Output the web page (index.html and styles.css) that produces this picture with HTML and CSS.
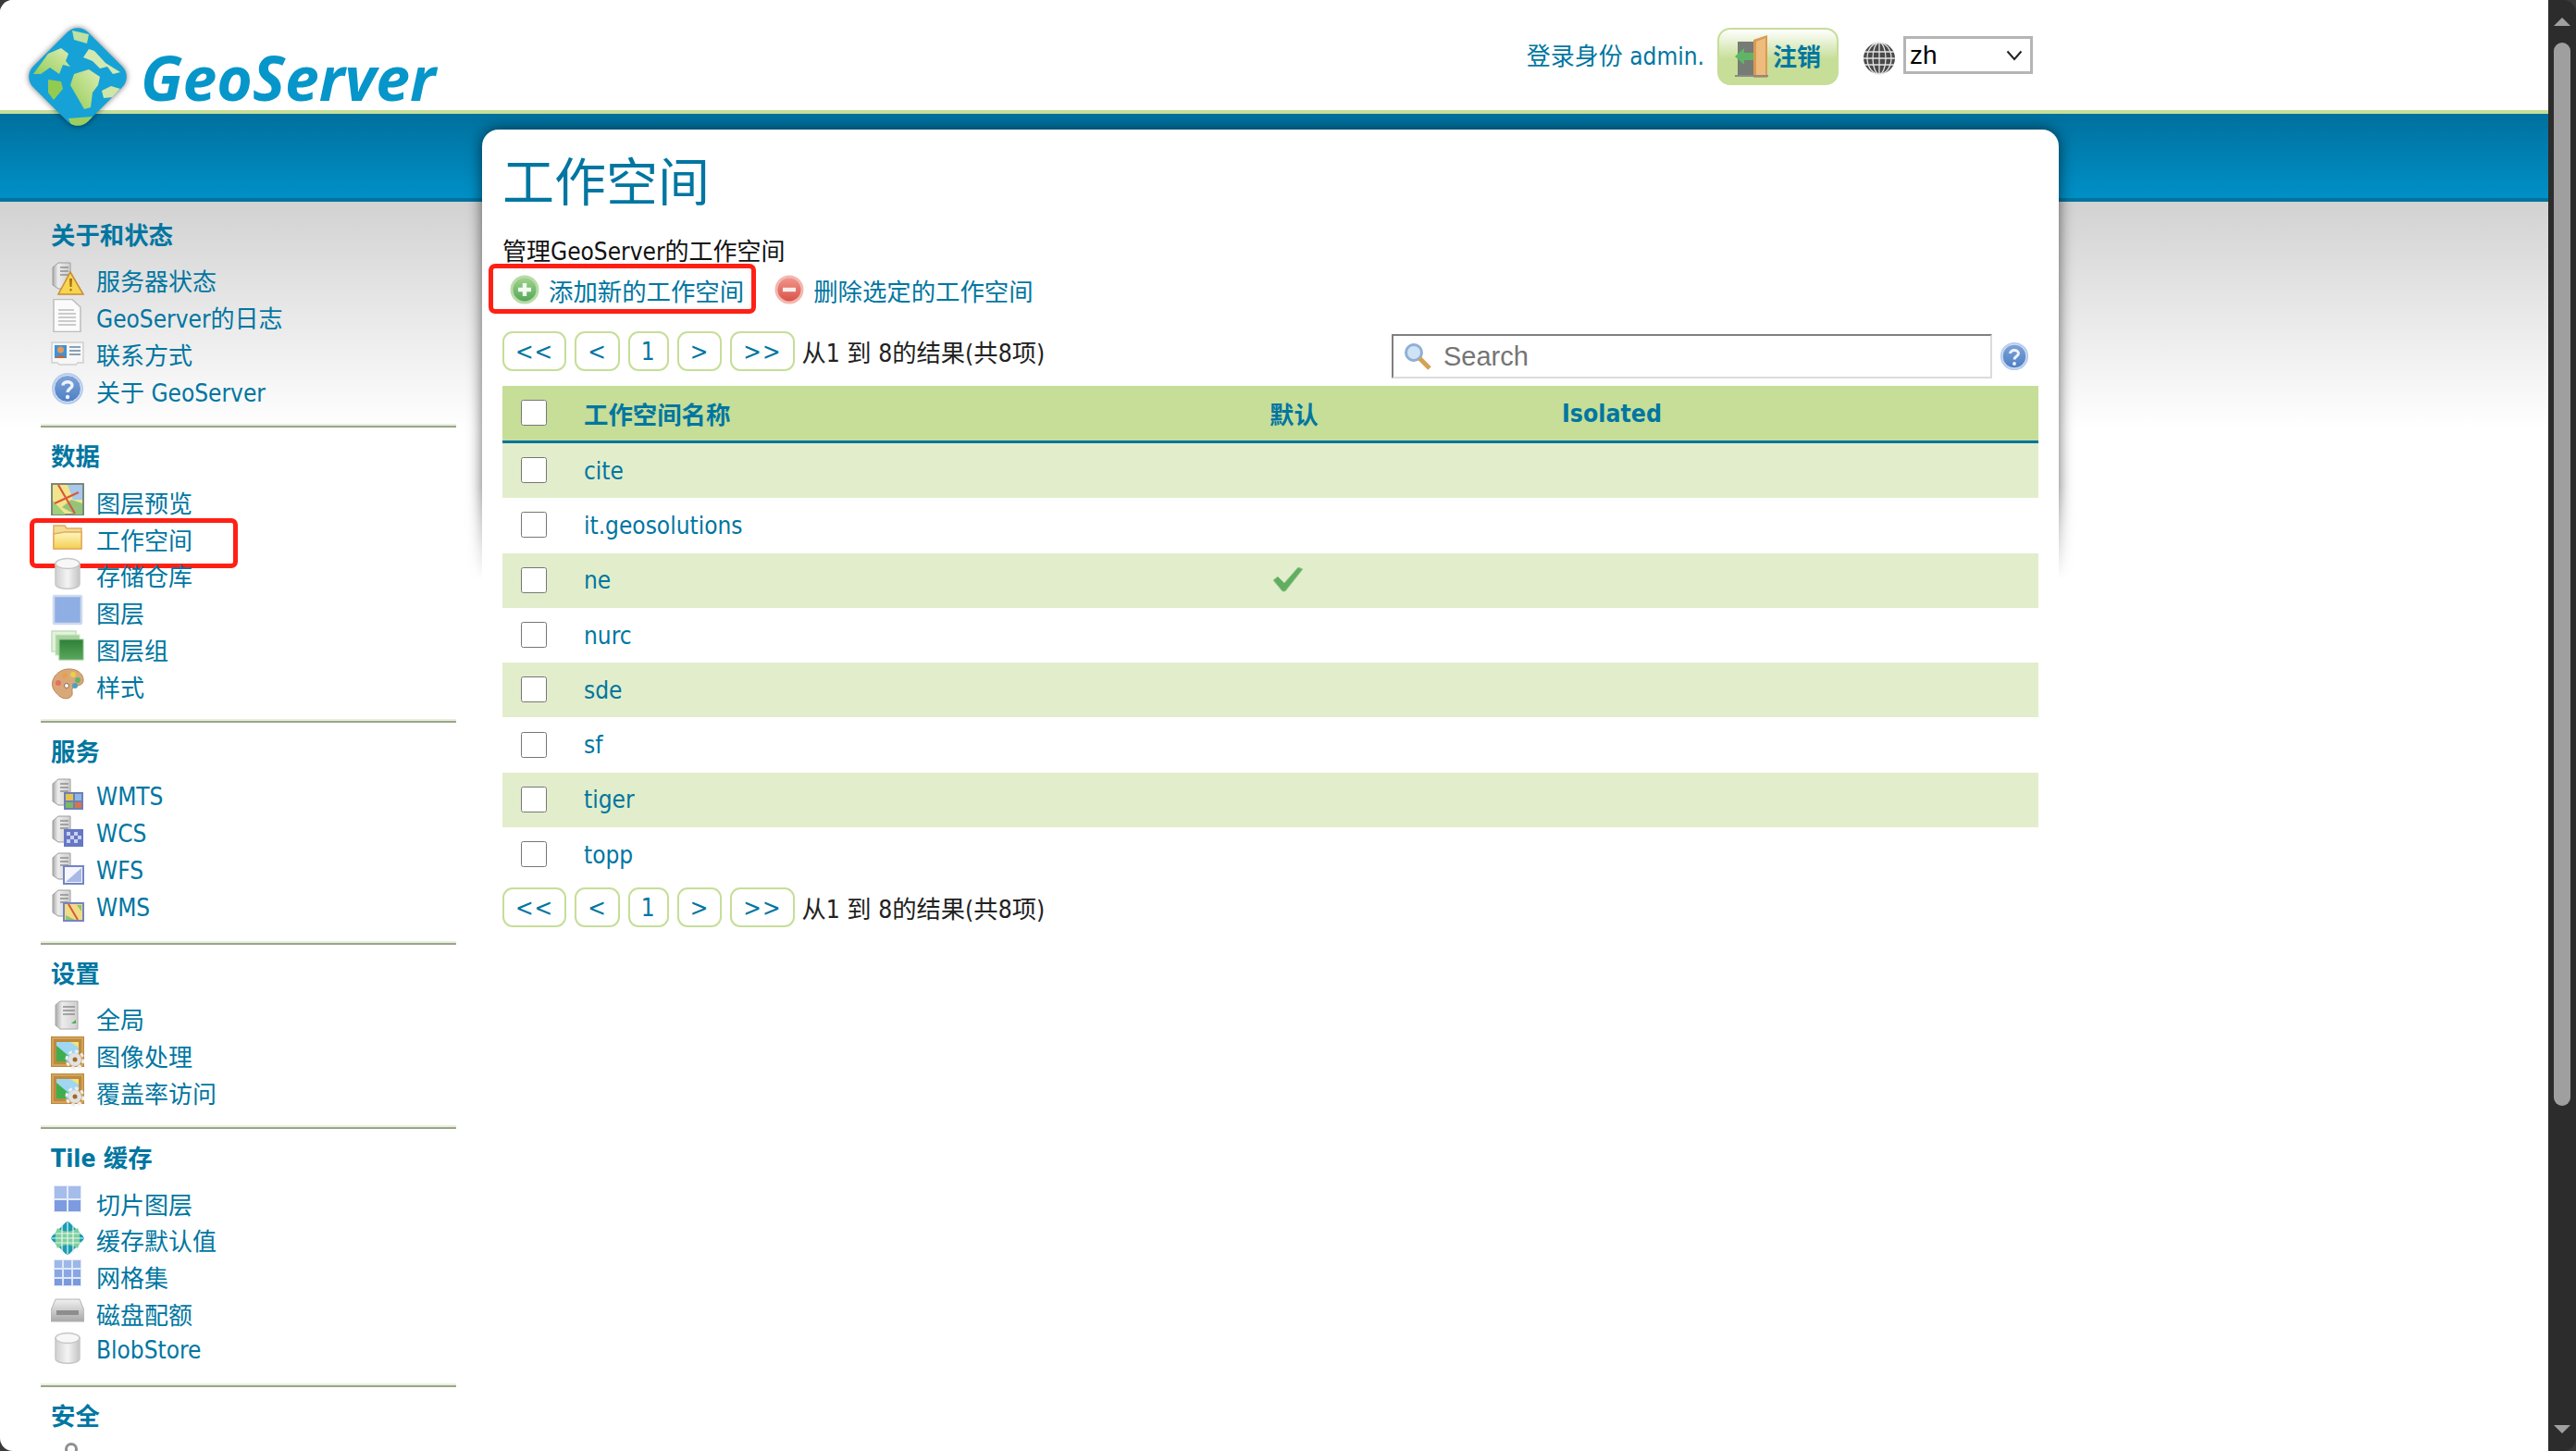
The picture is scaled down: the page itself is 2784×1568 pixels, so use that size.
FILE: index.html
```html
<!DOCTYPE html>
<html lang="zh">
<head>
    <meta charset="UTF-8">
    <title>GeoServer: 工作空间</title>
    <link rel="stylesheet" href="styles.css">
</head>
<body>
<svg class="defs" xmlns="http://www.w3.org/2000/svg">
    <defs>
        <linearGradient id="g-gray" x1="0" x2="1" y1="0" y2="0"><stop offset="0" stop-color="#a9a9a9"/><stop offset=".3" stop-color="#ececec"/><stop offset="1" stop-color="#cfcfcf"/></linearGradient>
        <linearGradient id="g-help" x1="0" x2="0" y1="0" y2="1"><stop offset="0" stop-color="#7fa3d8"/><stop offset="1" stop-color="#4d7fc4"/></linearGradient>
        <linearGradient id="g-folder" x1="0" x2="0" y1="0" y2="1"><stop offset="0" stop-color="#fff6c0"/><stop offset="1" stop-color="#f3cf52"/></linearGradient>
        <linearGradient id="g-db" x1="0" x2="1" y1="0" y2="0"><stop offset="0" stop-color="#cfcfcf"/><stop offset=".5" stop-color="#f4f4f4"/><stop offset="1" stop-color="#c4c4c4"/></linearGradient>
        <linearGradient id="g-green" x1="0" x2="0" y1="0" y2="1"><stop offset="0" stop-color="#2f7f38"/><stop offset="1" stop-color="#5aa75c"/></linearGradient>
        <linearGradient id="g-plus" x1="0" x2="0" y1="0" y2="1"><stop offset="0" stop-color="#9fd18b"/><stop offset="1" stop-color="#52a85a"/></linearGradient>
        <linearGradient id="g-minus" x1="0" x2="0" y1="0" y2="1"><stop offset="0" stop-color="#f1948a"/><stop offset="1" stop-color="#d9534a"/></linearGradient>
        <linearGradient id="g-disk" x1="0" x2="0" y1="0" y2="1"><stop offset="0" stop-color="#f0f0f0"/><stop offset="1" stop-color="#a8a8a8"/></linearGradient>
        <linearGradient id="g-land" x1="0" x2="1" y1="1" y2="0"><stop offset="0" stop-color="#95cc55"/><stop offset="1" stop-color="#dcedb4"/></linearGradient>
        <clipPath id="clip-globe"><rect x="12" y="13" width="84" height="84" rx="16" transform="rotate(45 54 55)"/></clipPath>
    </defs>

    <symbol id="i-server" viewBox="0 0 36 36">
        <path d="M2 6 8 1H21V29H8L2 25Z" fill="url(#g-gray)" stroke="#9c9c9c"/>
        <path d="M10 6H19M10 10H19M10 14H19" stroke="#8f8f8f" stroke-width="1.6"/>
    </symbol>
    <symbol id="i-warn" viewBox="0 0 36 36">
        <use href="#i-server"/>
        <path d="M21 11 35 35H8Z" fill="#f7d54e" stroke="#c98d34" stroke-width="1.5"/>
        <path d="M20 18H23L22.500 27H20.500ZM20.500 29H22.500V31.500H20.500Z" fill="#a6701c"/>
    </symbol>
    <symbol id="i-doc" viewBox="0 0 36 36">
        <path d="M3 .5H23L32 9V35.500H3Z" fill="#fbfbfb" stroke="#bdbdbd" stroke-width="1.500"/>
        <path d="M8 12H25M8 16H27M8 20H27M8 24H27M8 28H27" stroke="#bcbcbc" stroke-width="1.600"/>
    </symbol>
    <symbol id="i-card" viewBox="0 0 36 36">
        <path d="M1 7H35V29H29L27 31H9L7 29H1Z" fill="#f7f7f7" stroke="#cfcfcf" stroke-width="1.500"/>
        <rect x="4" y="10" width="13" height="14" fill="#3f92d8"/>
        <circle cx="10.500" cy="15" r="3.500" fill="#e6975a"/>
        <path d="M5.500 24C6 20 15 20 15.500 24Z" fill="#c9642e"/>
        <path d="M20 12H32M20 16H32M20 20H32" stroke="#8aa0b8" stroke-width="1.800"/>
    </symbol>
    <symbol id="i-help" viewBox="0 0 36 36">
        <circle cx="18" cy="18" r="17" fill="#b8cdea"/>
        <circle cx="18" cy="18" r="14.500" fill="url(#g-help)" stroke="#dfe9f6"/>
        <path d="M13 14.500C13 9.500 23 9.500 23 14.500 23 18 18 18 18 22" fill="none" stroke="#eef3fa" stroke-width="3.400"/>
        <circle cx="18" cy="27" r="2.200" fill="#eef3fa"/>
    </symbol>
    <symbol id="i-map" viewBox="0 0 36 36">
        <rect x="1" y="1" width="34" height="33" fill="#f2e48a" stroke="#7b887b" stroke-width="2"/>
        <path d="M2 19 16 34H2Z" fill="#9fcf78"/>
        <path d="M18 2H34V18H24Z" fill="#a8c8ec"/>
        <path d="M12 26 26 34H34V22L22 18Z" fill="#92c57a"/>
        <path d="M8 2 26 33M4 22 30 10" stroke="#d9573f" stroke-width="2.200" fill="none"/>
    </symbol>
    <symbol id="i-folder" viewBox="0 0 36 36">
        <path d="M3 6H15L17 9H33V31H3Z" fill="#f0dd94" stroke="#e3ab5e" stroke-width="1.500"/>
        <path d="M3 15 15 13H33V31H3Z" fill="url(#g-folder)" stroke="#e3ab5e" stroke-width="1.500"/>
    </symbol>
    <symbol id="i-db" viewBox="0 0 36 36">
        <path d="M5 7V29C5 36 31 36 31 29V7Z" fill="url(#g-db)" stroke="#c6c6c6" stroke-width="1.500"/>
        <ellipse cx="18" cy="7" rx="13" ry="5.500" fill="#f7f7f7" stroke="#c6c6c6" stroke-width="1.500"/>
    </symbol>
    <symbol id="i-layer" viewBox="0 0 36 36">
        <rect x="3" y="2" width="30" height="30" rx="1" fill="#8eaee4" stroke="#ced9ee" stroke-width="2.500"/>
    </symbol>
    <symbol id="i-group" viewBox="0 0 36 36">
        <rect x="1" y="1" width="26" height="22" fill="#e4f2df" stroke="#bfe0b8" stroke-width="1.500"/>
        <rect x="5" y="5" width="26" height="22" fill="#a9d3a0" stroke="#cbe6c4" stroke-width="1"/>
        <rect x="9" y="10" width="26" height="22" fill="url(#g-green)" stroke="#8fc48c"/>
    </symbol>
    <symbol id="i-palette" viewBox="0 0 36 36">
        <path d="M18 2C30 1 36 9 35 15 34 21 27 19 24 22 21 25 26 30 20 33 14 36 7 31 3 24-2 15 6 3 18 2Z" fill="#d9a878" stroke="#b88758"/>
        <circle cx="8" cy="17" r="3" fill="#e96d66"/>
        <circle cx="15" cy="9" r="3" fill="#eb9d4c"/>
        <circle cx="24" cy="8" r="3" fill="#e9cf4c"/>
        <circle cx="29" cy="14" r="3" fill="#5fb56a"/>
        <circle cx="26" cy="20" r="3" fill="#4c9fc4"/>
        <circle cx="17" cy="20" r="2.500" fill="#fff" stroke="#8a6a4a"/>
    </symbol>
    <symbol id="i-wmts" viewBox="0 0 36 36">
        <use href="#i-server"/>
        <rect x="14" y="15" width="21" height="19" fill="#6f7fb5"/>
        <rect x="16" y="17" width="8" height="7" fill="#e7c34c"/>
        <rect x="26" y="17" width="7" height="7" fill="#8fb7e6"/>
        <rect x="16" y="26" width="8" height="6" fill="#79b968"/>
        <rect x="26" y="26" width="7" height="6" fill="#d9734c"/>
    </symbol>
    <symbol id="i-wcs" viewBox="0 0 36 36">
        <use href="#i-server"/>
        <rect x="14" y="15" width="21" height="19" fill="#6677c6"/>
        <path d="M17 18H21V22H17ZM25 18H29V22H25ZM21 22H25V26H21ZM29 22H33V26H29ZM17 26H21V30H17ZM25 26H29V30H25Z" fill="#c8d0ee"/>
    </symbol>
    <symbol id="i-wfs" viewBox="0 0 36 36">
        <use href="#i-server"/>
        <rect x="14" y="15" width="21" height="19" fill="#f4f6fc" stroke="#7484c4" stroke-width="2"/>
        <path d="M16 32 33 17V32Z" fill="#a9b9e6"/>
    </symbol>
    <symbol id="i-wms" viewBox="0 0 36 36">
        <use href="#i-server"/>
        <rect x="14" y="15" width="21" height="19" fill="#f0dc84" stroke="#7484c4" stroke-width="2"/>
        <path d="M16 28 26 33H16ZM28 17H33V24Z" fill="#8fc474"/>
        <path d="M19 16 29 33" stroke="#d9573f" stroke-width="2"/>
    </symbol>
    <symbol id="i-global" viewBox="0 0 36 36">
        <path d="M5 5 10 1H29V31H10L5 27Z" fill="url(#g-gray)" stroke="#a8a8a8"/>
        <path d="M13 7H26M13 11H26M13 15H26" stroke="#8f8f8f" stroke-width="1.600"/>
        <path d="M22 25H27V21Z" fill="#4caf50"/>
    </symbol>
    <symbol id="i-image" viewBox="0 0 36 36">
        <rect x="0" y="0" width="36" height="33" fill="#bd8a3e"/>
        <rect x="2" y="2" width="32" height="29" fill="none" stroke="#d8ac66" stroke-width="1.500"/>
        <rect x="6" y="6" width="24" height="21" fill="#9fd6f2"/>
        <path d="M6 10 19 21 16 27H6Z" fill="#3fae4f"/>
        <path d="M21 6H30V12Z" fill="#f5e27a"/>
        <circle cx="26" cy="25" r="9" fill="none" stroke="#eeeeee" stroke-width="3" stroke-dasharray="4 3"/>
        <circle cx="26" cy="25" r="7" fill="#e2e2e2"/>
        <circle cx="26" cy="25" r="2.500" fill="#a06a28"/>
    </symbol>
    <symbol id="i-tiles" viewBox="0 0 36 36">
        <rect x="3" y="1" width="30" height="29" fill="#e4eaf7"/>
        <path d="M4 2H17V15H4ZM19 2H32V15H19Z" fill="#a5bdea"/>
        <path d="M4 17H17V29H4ZM19 17H32V29H19Z" fill="#7c9be0"/>
    </symbol>
    <symbol id="i-grid" viewBox="0 0 36 36">
        <rect x="3" y="1" width="30" height="29" fill="#dfe7f7"/>
        <path d="M4 2H12V10H4ZM14 2H22V10H14ZM24 2H32V10H24Z" fill="#9db7e8"/>
        <path d="M4 12H12V20H4ZM14 12H22V20H14ZM24 12H32V20H24Z" fill="#88a6e3"/>
        <path d="M4 22H12V29H4ZM14 22H22V29H14ZM24 22H32V29H24Z" fill="#7a99de"/>
    </symbol>
    <symbol id="i-gridglobe" viewBox="0 0 36 36">
        <rect x="4.500" y="4.500" width="27" height="27" rx="4" transform="rotate(45 18 18)" fill="#1a9cb4"/>
        <path d="M7 7C15 12 21 12 29 7 32 13 32 23 29 29 21 24 15 24 7 29 4 23 4 13 7 7Z" fill="#7fcf9c"/>
        <path d="M2 13H34M1 18H35M2 23H34M12 2V34M18 1V35M24 2V34" stroke="#e8f6f2" stroke-width="1.200"/>
    </symbol>
    <symbol id="i-disk" viewBox="0 0 36 36">
        <path d="M5 4H31L36 16V28H0V16Z" fill="url(#g-disk)" stroke="#b4b4b4"/>
        <rect x="6" y="16" width="24" height="5" fill="#8d8d8d"/>
    </symbol>
    <symbol id="i-key" viewBox="0 0 36 36">
        <circle cx="22" cy="7" r="5.500" fill="none" stroke="#8f8f8f" stroke-width="3"/>
        <path d="M18 11 6 30" stroke="#8f8f8f" stroke-width="3"/>
    </symbol>
    <symbol id="i-plus" viewBox="0 0 32 32">
        <circle cx="16" cy="16" r="15.500" fill="#b9dba8"/>
        <circle cx="16" cy="16" r="12.500" fill="url(#g-plus)"/>
        <path d="M16 9V23M9 16H23" stroke="#f4faef" stroke-width="4.400"/>
    </symbol>
    <symbol id="i-minus" viewBox="0 0 32 32">
        <circle cx="16" cy="16" r="15.500" fill="#f2b8b0"/>
        <circle cx="16" cy="16" r="12.500" fill="url(#g-minus)"/>
        <path d="M9 16H23" stroke="#fbeeec" stroke-width="4.400"/>
    </symbol>
</svg>

<div class="window">
<div class="page">
    <header class="top">
        <a class="logo" href="#">
            <svg class="globe" viewBox="0 0 108 110" width="108" height="110">
                <g clip-path="url(#clip-globe)">
                    <rect width="108" height="110" fill="#16a2d6"/>
                    <path d="M6 52 22 30 36 24 44 30 41 38 46 44 38 42 34 52 24 45 14 52Z" fill="url(#g-land)"/>
                    <path d="M22 58 36 60 38 68 28 80 22 72Z" fill="#93ca52"/>
                    <path d="M48 5 66 9 64 19 50 15Z" fill="#bfe0a0"/>
                    <path d="M60 34 66 25 72 27 84 40 100 50 92 52 86 44 78 46 70 38Z" fill="#d4e9b0"/>
                    <path d="M50 52 66 47 78 55 76 64 70 72 68 88 61 90 53 76 46 64Z" fill="url(#g-land)"/>
                    <path d="M80 70 90 65 100 68 92 77 82 78Z" fill="#cfe6a8"/>
                    <path d="M44 100 70 98 60 112 48 110Z" fill="#9ccf60"/>
                </g>
            </svg>
            <span class="logo-text">GeoServer</span>
        </a>
        <div class="user">
            <span class="user-name">登录身份 admin.</span>
            <a class="logout" href="#">
                <svg class="door" viewBox="0 0 36 46" width="36" height="46">
                    <rect x="3" y="7" width="24" height="36" fill="#777b76"/>
                    <path d="M20 5 35 0V46H20Z" fill="#d99a55"/>
                    <path d="M23 7 33 3V43H23Z" fill="#eebc7c"/>
                    <path d="M0 23 10 14V19H20V27H10V32Z" fill="#5fb565"/>
                    <rect x="0" y="43" width="36" height="2" fill="#8a8a8a"/>
                </svg>
                <span class="logout-text">注销</span>
            </a>
            <svg class="world" viewBox="0 0 36 36" width="36" height="36">
                <circle cx="18" cy="18" r="17" fill="#4a4a4a"/>
                <g fill="none" stroke="#e4e4e4" stroke-width="1.300">
                    <ellipse cx="18" cy="18" rx="7" ry="17"/>
                    <ellipse cx="18" cy="18" rx="13" ry="17"/>
                    <path d="M18 1V35M2 11H34M1 18H35M2 25H34"/>
                </g>
            </svg>
            <div class="lang-box">
                <select class="lang"><option>zh</option></select>
                <svg class="chevron" viewBox="0 0 18 12" width="18" height="12"><path d="M1.500 1.500 9 10 16.500 1.500" fill="none" stroke="#222" stroke-width="2"/></svg>
            </div>
        </div>
    </header>
    <div class="band"></div>

    <div class="content">
        <nav class="side">
            <section class="side-group">
                <h3>关于和状态</h3>
                <ul>
                    <li><a href="#"><svg class="ico"><use href="#i-warn"/></svg>服务器状态</a></li>
                    <li><a href="#"><svg class="ico"><use href="#i-doc"/></svg>GeoServer的日志</a></li>
                    <li><a href="#"><svg class="ico"><use href="#i-card"/></svg>联系方式</a></li>
                    <li><a href="#"><svg class="ico"><use href="#i-help"/></svg>关于 GeoServer</a></li>
                </ul>
            </section>
            <hr>
            <section class="side-group">
                <h3>数据</h3>
                <ul>
                    <li><a href="#"><svg class="ico"><use href="#i-map"/></svg>图层预览</a></li>
                    <li class="marked"><a href="#"><svg class="ico"><use href="#i-folder"/></svg>工作空间</a></li>
                    <li><a href="#"><svg class="ico"><use href="#i-db"/></svg>存储仓库</a></li>
                    <li><a href="#"><svg class="ico"><use href="#i-layer"/></svg>图层</a></li>
                    <li><a href="#"><svg class="ico"><use href="#i-group"/></svg>图层组</a></li>
                    <li><a href="#"><svg class="ico"><use href="#i-palette"/></svg>样式</a></li>
                </ul>
            </section>
            <hr>
            <section class="side-group">
                <h3>服务</h3>
                <ul>
                    <li><a href="#"><svg class="ico"><use href="#i-wmts"/></svg>WMTS</a></li>
                    <li><a href="#"><svg class="ico"><use href="#i-wcs"/></svg>WCS</a></li>
                    <li><a href="#"><svg class="ico"><use href="#i-wfs"/></svg>WFS</a></li>
                    <li><a href="#"><svg class="ico"><use href="#i-wms"/></svg>WMS</a></li>
                </ul>
            </section>
            <hr>
            <section class="side-group">
                <h3>设置</h3>
                <ul>
                    <li><a href="#"><svg class="ico"><use href="#i-global"/></svg>全局</a></li>
                    <li><a href="#"><svg class="ico"><use href="#i-image"/></svg>图像处理</a></li>
                    <li><a href="#"><svg class="ico"><use href="#i-image"/></svg>覆盖率访问</a></li>
                </ul>
            </section>
            <hr>
            <section class="side-group">
                <h3>Tile 缓存</h3>
                <ul>
                    <li><a href="#"><svg class="ico"><use href="#i-tiles"/></svg>切片图层</a></li>
                    <li><a href="#"><svg class="ico"><use href="#i-gridglobe"/></svg>缓存默认值</a></li>
                    <li><a href="#"><svg class="ico"><use href="#i-grid"/></svg>网格集</a></li>
                    <li><a href="#"><svg class="ico"><use href="#i-disk"/></svg>磁盘配额</a></li>
                    <li><a href="#"><svg class="ico"><use href="#i-db"/></svg>BlobStore</a></li>
                </ul>
            </section>
            <hr>
            <section class="side-group">
                <h3>安全</h3>
                <ul>
                    <li><a href="#" aria-label="安全设置"><svg class="ico"><use href="#i-key"/></svg></a></li>
                </ul>
            </section>
        </nav>

        <main class="main">
            <div class="card-shade"></div>
            <div class="card">
                <h1>工作空间</h1>
                <p class="desc">管理GeoServer的工作空间</p>
                <div class="actions">
                    <a class="action marked-action" href="#"><svg class="ico-sm"><use href="#i-plus"/></svg>添加新的工作空间</a>
                    <a class="action" href="#"><svg class="ico-sm"><use href="#i-minus"/></svg>删除选定的工作空间</a>
                </div>
                <div class="tools">
                    <div class="pager">
                        <a href="#">&lt;&lt;</a>
                        <a href="#">&lt;</a>
                        <a href="#">1</a>
                        <a href="#">&gt;</a>
                        <a href="#">&gt;&gt;</a>
                        <span>从1 到 8的结果(共8项)</span>
                    </div>
                    <div class="search">
                        <svg class="search-ico" viewBox="0 0 32 32" width="32" height="32">
                            <circle cx="12" cy="12" r="8.500" fill="#cfe3f6" stroke="#8fb0d4" stroke-width="3"/>
                            <path d="M18 18 29 29" stroke="#d2a356" stroke-width="5"/>
                        </svg>
                        <input type="text" placeholder="Search">
                    </div>
                    <svg class="ico-sm search-help"><use href="#i-help"/></svg>
                </div>
                <table class="list">
                    <thead>
                        <tr><th><input type="checkbox"></th><th>工作空间名称</th><th>默认</th><th>Isolated</th></tr>
                    </thead>
                    <tbody>
                        <tr><td><input type="checkbox"></td><td><a href="#">cite</a></td><td></td><td></td></tr>
                        <tr><td><input type="checkbox"></td><td><a href="#">it.geosolutions</a></td><td></td><td></td></tr>
                        <tr>
                            <td><input type="checkbox"></td><td><a href="#">ne</a></td>
                            <td><svg class="tick" viewBox="0 0 34 28" width="34" height="28"><path d="M1 15 6 11 13 18 28 1 33 3 14 27H11Z" fill="#62ad60" stroke="#9ccf98"/></svg></td>
                            <td></td>
                        </tr>
                        <tr><td><input type="checkbox"></td><td><a href="#">nurc</a></td><td></td><td></td></tr>
                        <tr><td><input type="checkbox"></td><td><a href="#">sde</a></td><td></td><td></td></tr>
                        <tr><td><input type="checkbox"></td><td><a href="#">sf</a></td><td></td><td></td></tr>
                        <tr><td><input type="checkbox"></td><td><a href="#">tiger</a></td><td></td><td></td></tr>
                        <tr><td><input type="checkbox"></td><td><a href="#">topp</a></td><td></td><td></td></tr>
                    </tbody>
                </table>
                <div class="pager pager-bottom">
                    <a href="#">&lt;&lt;</a>
                    <a href="#">&lt;</a>
                    <a href="#">1</a>
                    <a href="#">&gt;</a>
                    <a href="#">&gt;&gt;</a>
                    <span>从1 到 8的结果(共8项)</span>
                </div>
            </div>
        </main>
    </div>
</div>
<div class="scrollbar">
    <div class="arrow-up"></div>
    <div class="thumb"></div>
    <div class="arrow-down"></div>
</div>
</div>
</body>
</html>
```

FILE: styles.css
```css
html, body {
    height: 100%;
    margin: 0;
}
body {
    background-color: #3a3a3a;
    font-family: "DejaVu Sans Condensed", "DejaVu Sans", "Noto Sans CJK SC", sans-serif;
    font-stretch: condensed;
    font-size: 26px;
    color: #111;
    overflow: hidden;
}
a {
    color: #0076a1;
    text-decoration: none;
}
.defs {
    position: absolute;
    width: 0;
    height: 0;
}
.window {
    display: flex;
    height: 100vh;
}
.page {
    flex: 1;
    min-width: 0;
    background-color: #fff;
    border-radius: 14px 0 0 14px;
    overflow: hidden;
}

/* header */
.top {
    position: relative;
    z-index: 2;
    display: flex;
    justify-content: space-between;
    height: 119px;
    padding-right: 557px;
    background-color: #fff;
    border-bottom: 4px solid #c6de98;
}
.logo {
    display: flex;
    align-items: flex-start;
    padding: 28px 0 0 30px;
}
.globe {
    flex: none;
    filter: drop-shadow(0 0 3px rgba(0, 0, 0, .55));
}
.logo-text {
    margin: 15px 0 0 14px;
    font-family: "Open Sans", sans-serif;
    font-stretch: normal;
    font-style: italic;
    font-weight: 700;
    font-size: 66px;
    line-height: 80px;
    color: #0796c9;
}
.user {
    display: flex;
    align-items: flex-start;
}
.user-name {
    margin: 42px 14px 0 0;
    line-height: 38px;
    color: #0076a1;
}
.logout {
    display: flex;
    align-items: center;
    gap: 5px;
    box-sizing: border-box;
    width: 131px;
    height: 62px;
    margin-top: 30px;
    padding-left: 17px;
    border: 2px solid #c6de98;
    border-radius: 14px;
    background: linear-gradient(#fff, #c6de98 55%);
    font-weight: 700;
}
.door {
    flex: none;
}
.logout-text {
    margin-bottom: 4px;
}
.world {
    margin: 45px 8px 0 26px;
}
.lang-box {
    position: relative;
    margin-top: 39px;
}
.lang {
    display: block;
    box-sizing: border-box;
    width: 140px;
    height: 41px;
    padding-left: 4px;
    border: 3px solid #b5b5b5;
    border-radius: 0;
    background-color: #fff;
    font-family: "Liberation Sans", sans-serif;
    font-size: 28px;
    color: #000;
    appearance: none;
}
.chevron {
    position: absolute;
    top: 15px;
    right: 11px;
}
.band {
    height: 95px;
    box-sizing: border-box;
    background: linear-gradient(#00709e, #0090c6);
    border-bottom: 4px solid #00749f;
}

/* content */
.content {
    display: flex;
    align-items: flex-start;
    background: linear-gradient(#d2d2d2, #fff) no-repeat 0 0 / 100% 245px;
}
.side {
    flex: none;
    width: 449px;
    margin-left: 44px;
    padding-top: 20px;
}
.side-group {
    padding: 0 0 16px 11px;
}
.side-group h3 {
    margin: 0;
    font-size: 26.4px;
    line-height: 34px;
    color: #0076a1;
}
.side-group ul {
    margin: 11px 0 0;
    padding: 0;
    list-style: none;
}
.side-group li {
    position: relative;
    height: 39.8px;
}
.side-group li a {
    display: flex;
    align-items: center;
    height: 100%;
}
.side hr {
    height: 4px;
    margin: 0 0 15.2px;
    border: 0;
    background: linear-gradient(#e8f0dc 50%, #9aa58a 50%);
}
.ico {
    flex: none;
    width: 36px;
    height: 36px;
    margin: 0 13px 4px 0;
}
.marked::after {
    content: "";
    position: absolute;
    top: -2px;
    left: -23px;
    box-sizing: border-box;
    width: 225px;
    height: 54px;
    border: 5px solid #ff2015;
    border-radius: 7px;
}

/* main card */
.main {
    position: relative;
    flex: none;
    width: 1704px;
    margin: -78px 0 0 28px;
}
.card-shade {
    position: absolute;
    top: -24px;
    left: -24px;
    right: -24px;
    height: 511px;
    -webkit-mask-image: linear-gradient(#000 80%, transparent);
    mask-image: linear-gradient(#000 80%, transparent);
}
.card-shade::before {
    content: "";
    position: absolute;
    top: 24px;
    left: 24px;
    right: 24px;
    height: 600px;
    border-radius: 18px;
    box-shadow: 0 0 16px rgba(0, 0, 0, .6);
}
.card {
    position: relative;
    min-height: 820px;
    box-sizing: border-box;
    padding: 18px 22px 0;
    background-color: #fff;
    border-radius: 18px 18px 0 0;
}
.card h1 {
    margin: 0;
    font-size: 56px;
    font-weight: 400;
    line-height: 80px;
    color: #0076a1;
}
.desc {
    margin: 14px 0 0;
    line-height: 40px;
}
.actions {
    display: flex;
    align-items: center;
    gap: 33px;
    height: 48px;
    margin-top: -3px;
    padding-left: 8px;
    font-size: 26.4px;
}
.action {
    position: relative;
    display: flex;
    align-items: center;
    gap: 10px;
}
.ico-sm {
    flex: none;
    width: 32px;
    height: 32px;
}
.marked-action::after {
    content: "";
    position: absolute;
    top: -9px;
    left: -23px;
    box-sizing: border-box;
    width: 289px;
    height: 54px;
    border: 5px solid #ff2015;
    border-radius: 7px;
}
.tools {
    display: flex;
    align-items: flex-start;
    margin: 21px 0 8px;
}
.pager {
    display: flex;
    align-items: center;
    gap: 9px;
    height: 43px;
}
.pager a {
    display: flex;
    align-items: center;
    box-sizing: border-box;
    height: 43px;
    padding: 0 12px;
    border: 2px solid #c6de98;
    border-radius: 11px;
    letter-spacing: 1px;
}
.pager span {
    margin-left: -1px;
    font-size: 26.3px;
    color: #222;
}
.pager-bottom {
    margin-top: 6px;
}
.search {
    position: relative;
    margin: 3px 8px 0 auto;
}
.search input {
    box-sizing: border-box;
    display: block;
    width: 649px;
    height: 48px;
    padding-left: 54px;
    border: 2px solid;
    border-color: #808080 #dcdcdc #dcdcdc #808080;
    font-family: "Liberation Sans", sans-serif;
    font-size: 29px;
}
.search-ico {
    position: absolute;
    top: 8px;
    left: 12px;
}
.search-help {
    margin: 11px 10px 0 0;
}

/* table */
.list {
    width: 1660px;
    table-layout: fixed;
    border-collapse: collapse;
}
.list th:nth-child(1) {
    width: 88px;
}
.list th:nth-child(2) {
    width: 741px;
}
.list th:nth-child(3) {
    width: 316px;
}
.list th {
    height: 59px;
    padding: 0;
    background-color: #c6de98;
    border-bottom: 3px solid #00749f;
    font-size: 26.4px;
    text-align: left;
    color: #0076a1;
}
.list td {
    height: 59.3px;
    padding: 0;
}
.list tbody tr:nth-child(odd) {
    background-color: #e2eecb;
}
.list input {
    display: block;
    width: 28px;
    height: 28px;
    margin: -1px 0 0 20px;
}
.tick {
    display: block;
    margin: -3px 0 0 3px;
}

/* scrollbar */
.scrollbar {
    flex: none;
    display: flex;
    flex-direction: column;
    align-items: center;
    box-sizing: border-box;
    width: 30px;
    padding: 19px 0;
    background-color: #2c2c2c;
    border-radius: 0 14px 14px 0;
}
.arrow-up, .arrow-down {
    width: 0;
    height: 0;
    border-left: 9px solid transparent;
    border-right: 9px solid transparent;
}
.arrow-up {
    border-bottom: 9px solid #a0a0a0;
}
.arrow-down {
    margin-top: auto;
    border-top: 9px solid #a0a0a0;
}
.thumb {
    width: 18px;
    height: 1149px;
    margin-top: 18px;
    border-radius: 9px;
    background-color: #9f9f9f;
}
```
